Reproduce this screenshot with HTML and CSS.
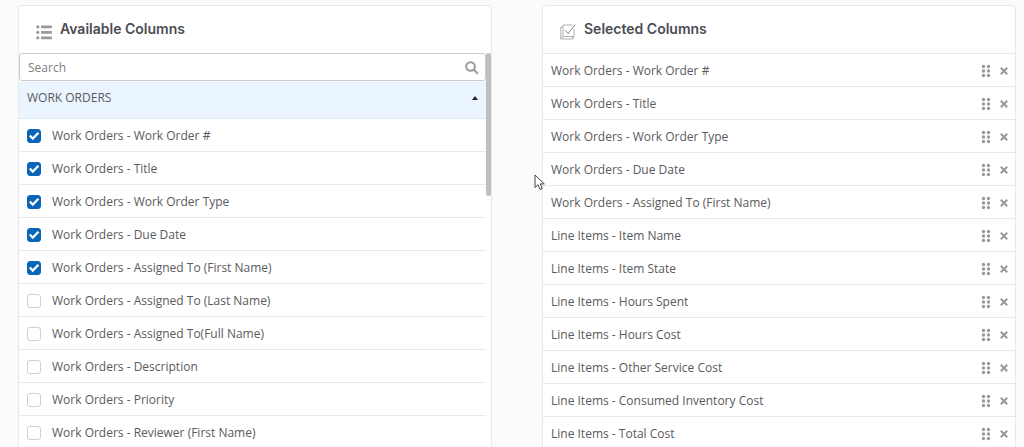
FILE: index.html
```html
<!DOCTYPE html>
<html lang="en">
<head>
    <meta charset="utf-8">
    <title>Column Selection</title>
    <link rel="stylesheet" href="styles.css">
</head>
<body>

<svg class="sprite" aria-hidden="true">
    <symbol id="grip" viewBox="0 0 10 14">
        <circle cx="2.5" cy="2.5" r="1.7"/><circle cx="7.5" cy="2.5" r="1.7"/>
        <circle cx="2.5" cy="7" r="1.7"/><circle cx="7.5" cy="7" r="1.7"/>
        <circle cx="2.5" cy="11.5" r="1.7"/><circle cx="7.5" cy="11.5" r="1.7"/>
    </symbol>
    <symbol id="cross" viewBox="0 0 8 8">
        <path d="M.8 .8l6.4 6.4M7.2 .8L.8 7.2" fill="none" stroke="currentColor" stroke-width="2"/>
    </symbol>
</svg>

<main class="columns">
    <section class="panel">
        <header class="panel-header">
            <svg class="header-icon" viewBox="0 0 16 16">
                <circle cx="1.8" cy="2.8" r="1.6"/><rect x="5" y="1.4" width="11" height="2.8" rx="0.6"/>
                <circle cx="1.8" cy="8.3" r="1.6"/><rect x="5" y="6.9" width="11" height="2.8" rx="0.6"/>
                <circle cx="1.8" cy="13.8" r="1.6"/><rect x="5" y="12.4" width="11" height="2.8" rx="0.6"/>
            </svg>
            <h2>Available Columns</h2>
        </header>
        <div class="scroll-area">
            <div class="scroll-content">
                <div class="search">
                    <input type="text" placeholder="Search" aria-label="Search columns">
                    <svg viewBox="0 0 14 14">
                        <circle cx="5.5" cy="5.5" r="4.3"/>
                        <path d="M8.8 8.8l4 4"/>
                    </svg>
                </div>
                <button class="group" type="button" aria-expanded="true">WORK ORDERS <span class="caret"></span></button>
                <ul class="options">
                    <li><label><input type="checkbox" checked> Work Orders - Work Order #</label></li>
                    <li><label><input type="checkbox" checked> Work Orders - Title</label></li>
                    <li><label><input type="checkbox" checked> Work Orders - Work Order Type</label></li>
                    <li><label><input type="checkbox" checked> Work Orders - Due Date</label></li>
                    <li><label><input type="checkbox" checked> Work Orders - Assigned To (First Name)</label></li>
                    <li><label><input type="checkbox"> Work Orders - Assigned To (Last Name)</label></li>
                    <li><label><input type="checkbox"> Work Orders - Assigned To(Full Name)</label></li>
                    <li><label><input type="checkbox"> Work Orders - Description</label></li>
                    <li><label><input type="checkbox"> Work Orders - Priority</label></li>
                    <li><label><input type="checkbox"> Work Orders - Reviewer (First Name)</label></li>
                </ul>
            </div>
            <div class="scrollbar"></div>
        </div>
    </section>

    <section class="panel">
        <header class="panel-header">
            <svg class="header-icon outline" viewBox="0 0 16 16">
                <path d="M12.5 1H3v11.5h11V5"/>
                <path d="M3 3H.8v12h11.7v-2.5M.8 15L3 12.5M12.5 15l1.5-2.5"/>
                <path class="tick" d="M5.2 6.2l3 3.3L15 .8"/>
            </svg>
            <h2>Selected Columns</h2>
        </header>
        <ul class="selected">
            <li><span>Work Orders - Work Order #</span></li>
            <li><span>Work Orders - Title</span></li>
            <li><span>Work Orders - Work Order Type</span></li>
            <li><span>Work Orders - Due Date</span></li>
            <li><span>Work Orders - Assigned To (First Name)</span></li>
            <li><span>Line Items - Item Name</span></li>
            <li><span>Line Items - Item State</span></li>
            <li><span>Line Items - Hours Spent</span></li>
            <li><span>Line Items - Hours Cost</span></li>
            <li><span>Line Items - Other Service Cost</span></li>
            <li><span>Line Items - Consumed Inventory Cost</span></li>
            <li><span>Line Items - Total Cost</span></li>
        </ul>
    </section>
</main>

<svg class="pointer" viewBox="0 0 12 17" aria-hidden="true">
    <path d="M1 1v12.5l3-2.8 2 4.8 2.3-1-2-4.6h4z"/>
</svg>

<script>
    // every selected column gets a drag handle and a remove button
    document.querySelectorAll('.selected li').forEach(function (item) {
        const name = item.textContent;
        item.insertAdjacentHTML('beforeend',
            '<button type="button" class="move" aria-label="Move ' + name + '"><svg><use href="#grip"/></svg></button>' +
            '<button type="button" class="remove" aria-label="Remove ' + name + '"><svg><use href="#cross"/></svg></button>');
    });
</script>

</body>
</html>
```
FILE: styles.css
```css
:root {
    --page-bg: #fbfbfc;
    --border: #e9e9eb;
    --text: #5a5a5c;
    --icon: #999;
    --blue: #0965b8;
}

* {
    box-sizing: border-box;
}

body {
    margin: 0;
    height: 100vh;
    overflow: hidden;
    background: var(--page-bg);
    color: var(--text);
    font: 12px/16px "Open Sans", sans-serif;
}

ul {
    list-style: none;
    margin: 0;
    padding: 0;
}

button {
    background: none;
    border: 0;
    padding: 0;
    color: inherit;
    font: inherit;
    cursor: pointer;
}

.sprite {
    display: none;
}

.columns {
    display: grid;
    grid-template-columns: 1fr 1fr;
    gap: 50px;
    padding: 5px 8px 0 18px;
}

.panel {
    background: #fff;
    border: 1px solid var(--border);
    border-radius: 3px;
}

.panel-header {
    display: flex;
    align-items: center;
    gap: 8px;
    height: 47px;
    padding-left: 17px;
}

.panel-header h2 {
    margin: 0 0 1px;
    color: #4b4c54;
    font: 600 14px/20px Inter, sans-serif;
}

.header-icon {
    width: 16px;
    height: 16px;
    margin-top: 4px;
    fill: var(--icon);
}

.header-icon.outline {
    fill: none;
    stroke: #b0b0b0;
}

.header-icon .tick {
    stroke: #888;
}

.scroll-area {
    position: relative;
    padding-right: 5px;
}

.scrollbar {
    position: absolute;
    top: 0;
    right: 0;
    width: 5px;
    height: 143px;
    border-radius: 3px;
    background: #bfbfbf;
}

.search {
    display: flex;
    align-items: center;
    height: 28px;
    padding: 2px 6px 0 8px;
    border: 1px solid #ccc;
    border-radius: 3px;
}

.search input {
    flex: 1;
    min-width: 0;
    padding: 0;
    border: 0;
    outline: 0;
    background: none;
    color: inherit;
    font: inherit;
}

.search input::placeholder {
    color: #808080;
}

.search svg {
    width: 14px;
    height: 14px;
    fill: none;
    stroke: var(--icon);
    stroke-width: 2;
}

.group {
    display: flex;
    align-items: center;
    justify-content: space-between;
    width: 100%;
    height: 38px;
    padding: 0 8px 4px;
    background: #ebf5ff;
    border-top: 1px solid #f5f9fd;
    border-bottom: 1px solid #dfeaf3;
}

.caret {
    border: 3px solid transparent;
    border-top: 0;
    border-bottom: 4px solid #222;
}

.options li,
.selected li {
    height: 33px;
    padding-top: 2px;
    border-bottom: 1px solid var(--border);
}

.options label {
    display: flex;
    align-items: center;
    gap: 11px;
    height: 100%;
    padding-left: 8px;
}

.options input {
    appearance: none;
    width: 14px;
    height: 14px;
    margin: 0;
    border: 1px solid #d0d0d4;
    border-radius: 3px;
    background: #fff;
}

.options input:checked {
    border-color: var(--blue);
    background: var(--blue);
}

.options input:checked::before {
    content: "";
    display: block;
    height: 12px;
    background: #fff;
    clip-path: polygon(8% 52%, 22% 40%, 40% 58%, 80% 16%, 94% 30%, 40% 86%);
}

.selected {
    border-top: 1px solid var(--border);
}

.selected li {
    display: flex;
    align-items: center;
    padding-left: 8px;
    padding-right: 7px;
}

.selected span {
    flex: 1;
}

.selected button {
    display: flex;
    color: var(--icon);
}

.move svg {
    width: 10px;
    height: 14px;
    fill: currentColor;
}

.remove {
    margin-left: 9px;
}

.remove svg {
    width: 8px;
    height: 8px;
}

.pointer {
    position: absolute;
    top: 174px;
    left: 534px;
    width: 12px;
    height: 17px;
    fill: #fff;
    stroke: #444;
}
```
